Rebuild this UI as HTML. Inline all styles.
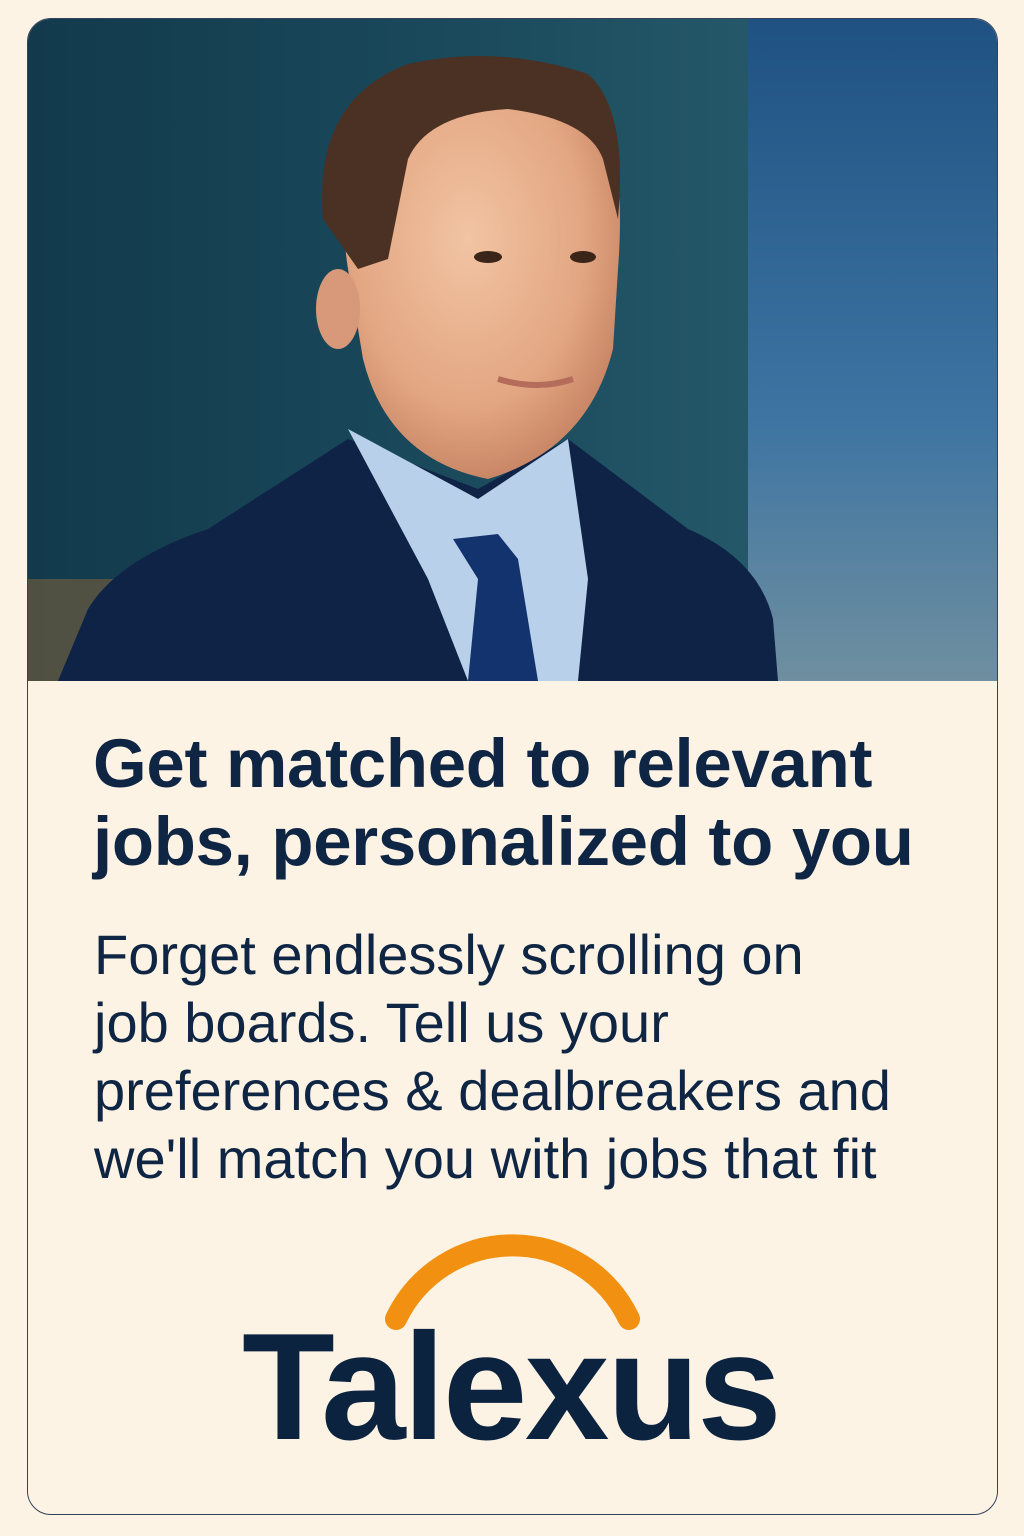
<!DOCTYPE html>
<html><head><meta charset="utf-8"><style>
html,body{margin:0;padding:0;background:#fdf3e4;}
body{width:1024px;height:1536px;position:relative;overflow:hidden;font-family:"Liberation Sans",sans-serif;}
.card{position:absolute;left:27px;top:18px;width:969px;height:1495px;border:1px solid #34435a;border-radius:24px;overflow:hidden;background:#fdf3e5;}
.photo{position:absolute;left:0;top:0;width:969px;height:662px;}
h1{position:absolute;left:65px;top:706px;margin:0;font-size:69px;line-height:78px;font-weight:700;color:#0f2544;letter-spacing:-0.3px;}
p{position:absolute;left:66px;top:902px;margin:0;font-size:56px;line-height:68px;color:#0f2544;letter-spacing:0;}
.logo{position:absolute;left:214px;top:1268px;font-size:152px;font-weight:700;color:#0c2340;letter-spacing:-2.5px;line-height:200px;}
</style></head><body>
<div class="card">
<svg class="photo" viewBox="0 0 969 662" xmlns="http://www.w3.org/2000/svg">
<defs>
<linearGradient id="sky" x1="0" y1="0" x2="0" y2="1"><stop offset="0" stop-color="#1f5282"/><stop offset="0.6" stop-color="#3d74a2"/><stop offset="1" stop-color="#6f8fa0"/></linearGradient>
<linearGradient id="bld" x1="0" y1="0" x2="1" y2="0"><stop offset="0" stop-color="#123a4c"/><stop offset="0.6" stop-color="#1a4a5c"/><stop offset="1" stop-color="#245868"/></linearGradient>
<radialGradient id="skin" cx="0.45" cy="0.4" r="0.6"><stop offset="0" stop-color="#f2c4a3"/><stop offset="0.7" stop-color="#e3a682"/><stop offset="1" stop-color="#c98766"/></radialGradient>
</defs>
<rect width="969" height="662" fill="url(#sky)"/>
<rect width="720" height="662" fill="url(#bld)"/>
<rect x="0" y="560" width="100" height="102" fill="#6b5a3e" opacity="0.7"/>
<path d="M30 662 L60 590 Q90 540 180 510 L320 420 L450 470 L540 420 L660 510 Q730 540 745 600 L750 662 Z" fill="#0f2347"/>
<path d="M320 410 L400 560 L440 662 L550 662 L560 560 L540 420 L450 480 Z" fill="#b9d0ea"/>
<path d="M425 520 L470 515 L490 540 L510 662 L440 662 L450 560 Z" fill="#13336e"/>
<path d="M320 250 Q300 120 380 80 Q470 40 560 80 Q600 120 590 250 L585 330 Q560 430 460 460 Q360 440 335 340 Z" fill="url(#skin)"/>
<path d="M295 200 Q285 80 380 45 Q470 25 560 55 Q600 90 590 200 L575 140 Q560 100 480 90 Q400 95 380 140 L360 240 L330 250 Z" fill="#4a3123"/>
<ellipse cx="310" cy="290" rx="22" ry="40" fill="#d8987a"/>
<ellipse cx="460" cy="238" rx="14" ry="6" fill="#3a2518"/>
<ellipse cx="555" cy="238" rx="13" ry="6" fill="#3a2518"/>
<path d="M470 360 Q510 372 545 360" stroke="#b56c5a" stroke-width="6" fill="none"/>
</svg>
<h1>Get matched to relevant<br>jobs, personalized to you</h1>
<p>Forget endlessly scrolling on<br>job boards. Tell us your<br>preferences &amp; dealbreakers and<br>we'll match you with jobs that fit</p>
<svg style="position:absolute;left:0;top:0" width="969" height="1495" xmlns="http://www.w3.org/2000/svg">
<path d="M368 1300 A129 129 0 0 1 601 1300" fill="none" stroke="#f29111" stroke-width="22" stroke-linecap="round"/>
</svg>
<div class="logo">Talexus</div>
</div>
</body></html>
